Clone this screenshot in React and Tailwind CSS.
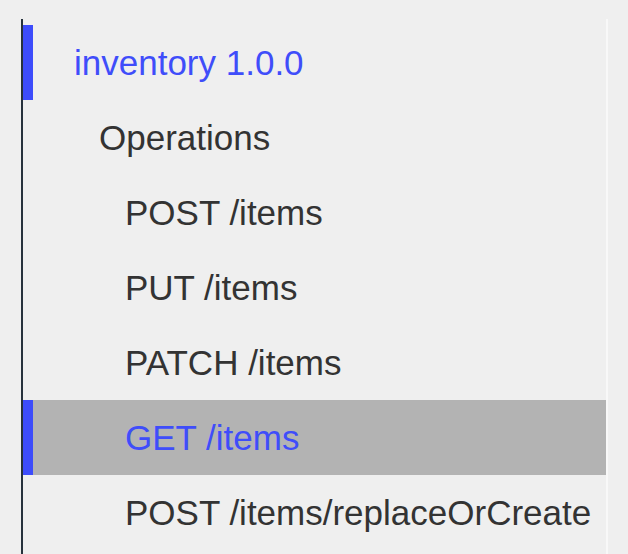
const items = [
  { label: 'POST /items' },
  { label: 'PUT /items' },
  { label: 'PATCH /items' },
  { label: 'GET /items', active: true },
  { label: 'POST /items/replaceOrCreate' },
];

function Row({ label, indent, active, current }) {
  return (
    <div
      className={`flex h-[75px] items-center border-l-[10px] ${
        active || current ? 'border-[#3d4cfb]' : 'border-transparent'
      } ${active ? 'bg-[#b3b3b3]' : ''}`}
    >
      <span
        className={`${indent} ${active || current ? 'text-[#3f4dfa]' : 'text-[#333333]'} whitespace-nowrap`}
      >
        {label}
      </span>
    </div>
  );
}

export default function App() {
  return (
    <div className="min-h-[554px] bg-[#efefef] pl-[21px] pt-[19px] font-['Liberation_Sans',Arial,sans-serif] text-[35px] leading-none">
      <div className="h-[535px] w-[587px] border-l-2 border-r-2 border-l-[#27323c] border-r-[#f8f8f8] pt-[6px]">
        <Row label="inventory 1.0.0" indent="pl-[41px]" current />
        <Row label="Operations" indent="pl-[66px]" />
        {items.map((item) => (
          <Row key={item.label} label={item.label} indent="pl-[92px]" active={item.active} />
        ))}
      </div>
    </div>
  );
}
